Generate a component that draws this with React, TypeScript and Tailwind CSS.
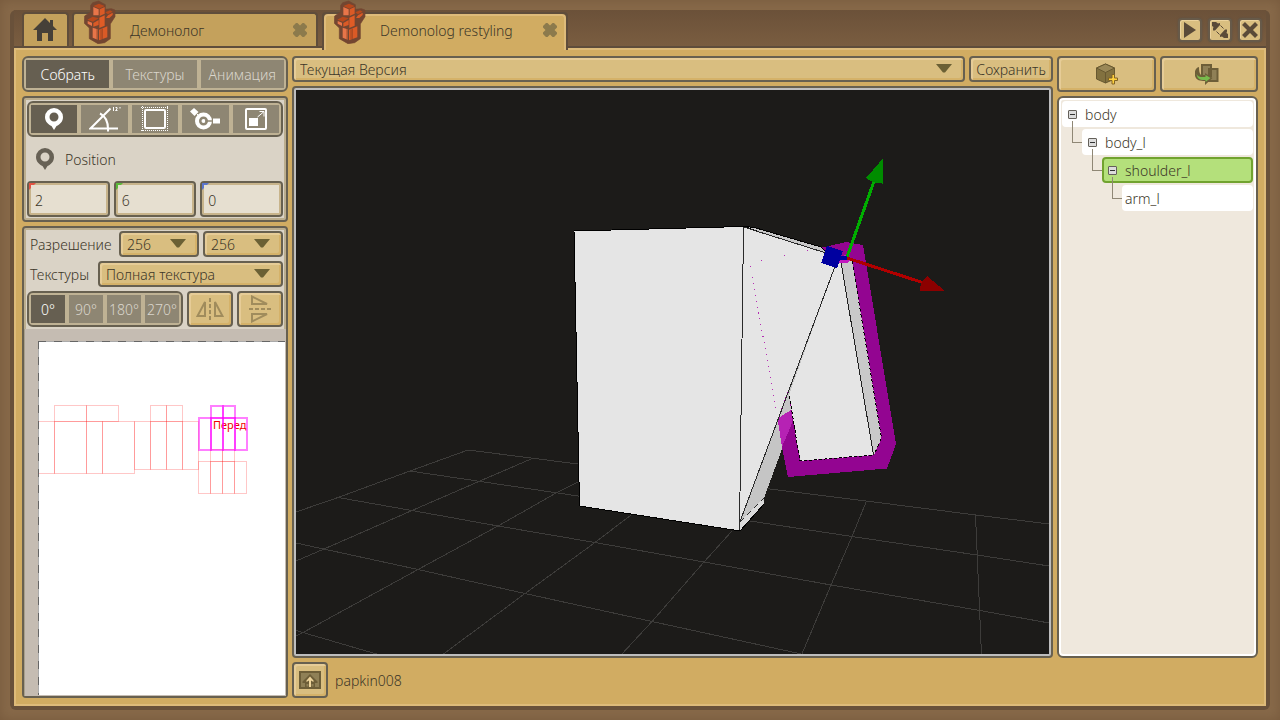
import { useState, type ReactNode } from "react";

const bevel =
  "rounded border-2 border-[#676050] bg-[#d9be80] text-[#3c3628] shadow-[inset_2px_2px_0_#e6cc97,inset_-2px_-2px_0_#d5b269]";

function Mascot() {
  return (
    <svg viewBox="44 0 96 132" className="absolute top-[-14px] left-[10px] h-11 w-8" aria-hidden="true">
      <path
        d="M88 3 70 8 64 16V36L46 48 45 70 60 84V116L86 131 106 128 123 116V72L137 50V30L126 26 108 28V14Z"
        fill="#734631"
        stroke="#734631"
        strokeWidth="2"
        strokeLinejoin="round"
      />
      <path d="M72 18 89 11 106 18 90 26Z" fill="#b8481c" />
      <path d="M72 21 88 28V46H72Z" fill="#e87549" />
      <path d="M91 28 106 21V41L91 48Z" fill="#da5a26" />
      <path d="M108 37 122 31 130 35 116 43Z" fill="#b8481c" />
      <path d="M116 46 130 38V45L120 54H110Z" fill="#da5a26" />
      <path d="M90 53 106 46V77L90 84Z" fill="#e05c26" />
      <path d="M54 59 70 50 88 55 71 65Z" fill="#b8481c" />
      <path d="M55 63 68 68V78L55 71Z" fill="#e87549" />
      <path d="M72 69 88 60V75L72 80Z" fill="#da5a26" />
      <path d="M70 83 85 88V119L70 113Z" fill="#e87549" />
      <path d="M89 89 114 79V112L89 121Z" fill="#da5a26" />
      <path d="M95 88V118M99 86V117M83 84V119" stroke="#8c3f20" strokeWidth="2" />
    </svg>
  );
}

function TabClose({ label }: { label: string }) {
  return (
    <button aria-label={label} className="ml-auto text-[#8c7a4c]">
      <svg viewBox="0 0 14 14" className="size-[14px]" fill="currentColor">
        <path d="M3 0h1.500L7 2.500 9.500 0H11l3 3v1.500L11.500 7 14 9.500V11l-3 3H9.500L7 11.500 4.500 14H3l-3-3V9.500L2.500 7 0 4.500V3z" />
      </svg>
    </button>
  );
}

function Caret() {
  return (
    <svg viewBox="0 0 16 9" className="pointer-events-none absolute top-2 right-[13px] h-[9px] w-4" aria-hidden="true">
      <path d="M0 0h16L9 8.500H7z" fill="#6b6034" />
    </svg>
  );
}

function Drop({ label, value, options, className }: { label: string; value: string; options: string[]; className: string }) {
  return (
    <div className={`relative ${className}`}>
      <select
        aria-label={label}
        defaultValue={value}
        className={`h-[26px] w-full appearance-none pt-0.5 pr-8 pl-[6px] leading-5 outline-none ${bevel}`}
      >
        {options.map((o) => (
          <option key={o}>{o}</option>
        ))}
      </select>
      <Caret />
    </div>
  );
}

function Segments({ items, active, onPick, className }: {
  items: { id: string; label: string; body: ReactNode }[];
  active: string;
  onPick: (id: string) => void;
  className: string;
}) {
  return (
    <div className={`flex h-9 gap-1 rounded-md border-2 border-[#676050] bg-[#bfb294] p-0.5 ${className}`}>
      {items.map((it) => (
        <button
          key={it.id}
          aria-label={it.label}
          aria-pressed={it.id === active}
          onClick={() => onPick(it.id)}
          className={`flex min-w-0 flex-1 items-center justify-center whitespace-nowrap ${
            it.id === active ? "bg-[#665f51] text-white" : "bg-[#8e8673] text-[#dbd6cd]"
          }`}
        >
          {it.body}
        </button>
      ))}
    </div>
  );
}

function Pin({ className }: { className: string }) {
  return (
    <svg viewBox="0 0 18 22" className={className} aria-hidden="true">
      <path
        fillRule="evenodd"
        fill="currentColor"
        d="M9 0a9 9 0 0 1 9 9c0 5-3.500 7.500-6.500 9L9 22l-2.500-4C3.500 16.500 0 14 0 9a9 9 0 0 1 9-9zm0 4.500a4.500 4.500 0 1 0 0 9 4.500 4.500 0 0 0 0-9z"
      />
    </svg>
  );
}

const tools = [
  { id: "position", label: "Position", body: <Pin className="h-[22px] w-[18px] text-white" /> },
  {
    id: "rotation",
    label: "Rotation",
    body: (
      <svg viewBox="0 0 32 26" className="h-[26px] w-8" fill="none" stroke="#fff" strokeWidth="2">
        <path d="M29 22.500H1.500L21.500 2.500M11 7.500c6 3 8.500 9 8 18" />
        <path d="M24.500 1v4M26.500 1.500h1.500v1.500l-1.500 1.500h2M31 1v1.500" strokeWidth="1" />
      </svg>
    ),
  },
  {
    id: "size",
    label: "Size",
    body: (
      <svg viewBox="0 0 28 26" className="h-[26px] w-7" fill="none" stroke="#fff">
        <rect x="4" y="4" width="20" height="18" rx="1" strokeWidth="2" />
        <path d="M0 1.500h28M0 24.500h28M1.500 0v26M26.500 0v26" strokeDasharray="1 1" />
      </svg>
    ),
  },
  {
    id: "pivot",
    label: "Pivot",
    body: (
      <svg viewBox="0 0 30 24" className="h-6 w-[30px]">
        <circle cx="13.500" cy="14" r="6.500" fill="none" stroke="#fff" strokeWidth="4" />
        <circle cx="13.500" cy="14" r="2" fill="#fff" />
        <path d="M4 1l4.500 4-4 4L0 4.500z" fill="#fff" />
        <path d="M7 7l2 2" stroke="#fff" />
        <path d="M15 14h9" stroke="#8e8673" strokeWidth="1.500" />
        <path d="M23 11.500h7v5h-7z" fill="#fff" />
      </svg>
    ),
  },
  {
    id: "scale",
    label: "Scale",
    body: (
      <svg viewBox="0 0 22 22" className="size-[22px]" fill="none" stroke="#fff">
        <rect x="1" y="1" width="20" height="20" rx="1" strokeWidth="2" />
        <path d="M4 10h9v8H4z" fill="#fff" stroke="none" />
        <path d="M12.500 9l6-5M14.500 3.500h4.500v5" />
      </svg>
    ),
  },
];

const textItem = (t: string) => ({ id: t, label: t, body: <span className="pt-0.5">{t}</span> });
const modes = ["Собрать", "Текстуры", "Анимация"].map(textItem);
const angles = ["0°", "90°", "180°", "270°"].map(textItem);

function Axis({ name, value, color }: { name: string; value: string; color: string }) {
  return (
    <label className="relative flex h-9 min-w-0 flex-1 rounded border-2 border-[#676050] bg-[#e6dfd0] shadow-[inset_0_0_0_2px_#c8b48b]">
      <svg viewBox="0 0 7 7" className="absolute top-0 left-0 size-[7px]" aria-hidden="true">
        <path d="M0 0h7L5 2H2v3L0 7z" fill={color} />
      </svg>
      <input aria-label={name} defaultValue={value} className="w-full min-w-0 bg-transparent pt-1 pl-[6px] text-[#3c3628] outline-none" />
    </label>
  );
}

const uvRects: [number, number, number, number][] = [
  [54, 405, 32, 16], [86, 405, 32, 16],
  [38, 421, 16, 52], [54, 421, 32, 52], [86, 421, 16, 52], [102, 421, 32, 52],
  [150, 405, 16, 16], [166, 405, 16, 16],
  [134, 421, 16, 48], [150, 421, 16, 48], [166, 421, 16, 48], [182, 421, 16, 48],
  [210, 449, 12, 12], [222, 449, 12, 12],
  [198, 461, 12, 32], [210, 461, 12, 32], [222, 461, 12, 32], [234, 461, 12, 32],
];
const uvActive: [number, number, number, number][] = [
  [211, 406, 12, 12], [223, 406, 12, 12],
  [199, 418, 12, 32], [211, 418, 12, 32], [223, 418, 12, 32], [235, 418, 12, 32],
];

function UvMap() {
  return (
    <svg viewBox="38 341 247 354" preserveAspectRatio="xMinYMin slice" className="h-0 min-h-0 w-full flex-1 bg-white">
      <g fill="none" stroke="#f00" strokeOpacity=".22" shapeRendering="crispEdges">
        {uvRects.map(([x, y, w, h]) => (
          <rect key={`${x}-${y}`} x={x + 0.5} y={y + 0.5} width={w} height={h} />
        ))}
      </g>
      <text x="213" y="429" fill="#f00000" fontSize="11" fontWeight="400">Перед</text>
      <g fill="none" stroke="#f0f" strokeOpacity=".5" strokeWidth="2" shapeRendering="crispEdges">
        {uvActive.map(([x, y, w, h]) => (
          <rect key={`${x}-${y}`} x={x} y={y} width={w} height={h} />
        ))}
      </g>
      <path d="M38 341.500h248M38.500 341v355" stroke="#aaa" shapeRendering="crispEdges" />
      <path d="M38 341.500h248M38.500 341v355" stroke="#666" strokeDasharray="8 8" shapeRendering="crispEdges" />
    </svg>
  );
}

function Scene() {
  return (
    <svg
      viewBox="296 90 753 564"
      preserveAspectRatio="xMidYMid slice"
      shapeRendering="crispEdges"
      className="h-0 min-h-0 w-full flex-1"
      role="img"
      aria-label="3D"
    >
      <g fill="none" stroke="#3d3c3a">
        <path d="M296 512 338 497.500 410 471 468 450 578 464 770 489 866 501 976 515 1049 524" />
        <path d="M410 471 578 496 750 521 852 536.500 977 555 1049 566" />
        <path d="M338 497.500 412 510.500 498 526 595 542.500 704 562 831 585 980 610.500 1049 623" />
        <path d="M296 543 418 569.500 525 593.500 652 621.500 806 655M296 630.500 380 655" />
        <path d="M531 459 480 481 412 510.500 324 549 296 561M578 482 557 492.500 498 526 418 569.500 304 632 296 636" />
        <path d="M631 515 595 542.500 525 593.500 442 655M732 531 704 562 652 621.500 621 655" />
        <path d="M866.500 501 852 536.500 831 585 801.500 655M975.500 515 981.500 655" />
      </g>
      <path d="M816 249 846 242 863 245 896 444 887 468.500 788 477 777 418Z" fill="#930591" />
      <path d="M743 226 756 228 821 247 828 254 822 255Z" fill="#c8c8c8" stroke="#000" strokeWidth="1" />
      <path d="M841 261 852 261 881.500 438 874 455Z" fill="#c9c9c9" />
      <path d="M832 263 841 262 874 455 800 461 789 395 787 380Z" fill="#e5e5e5" />
      <path d="M852 261 881.500 438 874 455" stroke="#000" strokeDasharray="3 3" fill="none" />
      <path d="M836 264 789 395 790 410 782 449 764 498 764 504 740 531V520Z" fill="#c5c5c5" />
      <path d="M836 264 789 395 791 403 800 461 874 455 841 262Z" fill="#e5e5e5" />
      <path d="M841 262 873.500 455" stroke="#222" strokeWidth="1" />
      <path d="M789 395 791 410 792.500 422 782 449 777 418Z" fill="#c5c5c5" />
      <path d="M777.500 418.500 791 410 792.500 422 782 447Z" fill="#b622b4" />
      <path d="M792.500 422 782 447 788 477 800 461Z" fill="#930591" />
      <path d="M574 231 743 226.500 740 531 579.500 506Z" fill="#e5e5e5" />
      <path d="M743 226.500 826 252.500 835 262 740 522Z" fill="#e5e5e5" />
      <path d="M740 531 764 504 763 498 740 522Z" fill="#dadada" />
      <path d="M743.500 227 826 253M835.500 265 739.500 523M743.500 227 742 340 739.500 531" fill="none" stroke="#2a2a2a" strokeWidth="1" />
      <path d="M740 522 764 498" fill="none" stroke="#2a2a2a" strokeWidth="1" strokeDasharray="6 4" />
      <path d="M574 231 743 226.500M574 231 579.500 506 740 531 764 504" fill="none" stroke="#000" strokeWidth="1" />
      <path d="M789 396 791 406 800 461 874 455" fill="none" stroke="#000" strokeWidth="1" strokeDasharray="3 2" />
      <path d="M807 250.500h1M784 255.500h1M761 260.500h1M750 266.500h1" stroke="#b52db3" />
      <path d="M752.500 277 776 410" stroke="#b52db3" strokeDasharray="1 5" />
      <path d="M839 260h7v3h-7z" fill="#c219bf" />
      <circle cx="846" cy="259" r="4" fill="#c219bf" />
      <path d="M847 257 874.500 180" stroke="#00ae00" strokeWidth="3" />
      <path d="M882.500 159 866 178Q874 184 883.500 183.500Z" fill="#008c00" />
      <path d="M847 258 924 283" stroke="#b00000" strokeWidth="3" />
      <path d="M945 291 927 276Q920 282 920 290.500Z" fill="#8c0000" />
      <path d="M840 257.500h7" stroke="#0000a0" strokeWidth="4" />
      <path d="M827 246 843 251 837 268 821 263Z" fill="#0000a0" />
    </svg>
  );
}

type TreeNode = { name: string; selected?: boolean; children?: TreeNode[] };
const tree: TreeNode = {
  name: "body",
  children: [{ name: "body_l", children: [{ name: "shoulder_l", selected: true, children: [{ name: "arm_l" }] }] }],
};

function Branch({ node, root = false }: { node: TreeNode; root?: boolean }) {
  return (
    <li className="relative">
      {!root && <span className="absolute top-[-8px] left-[-10px] h-[22px] w-[10px] border-b border-l border-[#8f8775]" />}
      <div
        className={`flex h-[26px] items-center rounded-sm border-2 ${
          node.selected ? "border-[#71a32f] bg-[#b4e07b]" : "border-white bg-white"
        } ${node.children ? "gap-2 pl-1" : "pl-px"}`}
      >
        {node.children && (
          <button aria-label="Свернуть" className="flex size-[9px] items-center justify-center rounded-[1px] border border-[#64605a] bg-[#dcdcdc]">
            <span className="h-px w-[5px] bg-[#333]" />
          </button>
        )}
        <span className="pt-0.5">{node.name}</span>
      </div>
      {node.children && (
        <ul className="mt-0.5 ml-5">
          {node.children.map((c) => (
            <Branch key={c.name} node={c} />
          ))}
        </ul>
      )}
    </li>
  );
}

const panel = "rounded border-2 border-[#676050] bg-[#dad3c6] shadow-[inset_0_0_0_2px_#bcae8e]";
const winButton =
  "flex size-6 items-center justify-center rounded-sm border-2 border-[#675a49] bg-[#d9be80] text-[#5a4a38] shadow-[inset_1px_1px_0_#ebd29c,0_0_2px_#59524a]";

export default function App() {
  const [mode, setMode] = useState("Собрать");
  const [tool, setTool] = useState("position");
  const [angle, setAngle] = useState("0°");

  return (
    <div className="flex min-h-screen flex-col bg-[#876949] p-[10px] font-['Noto_Sans',sans-serif] text-sm leading-5 font-light text-[#3c3628] shadow-[inset_0_0_12px_#775a3d]">
      <div className="flex flex-1 flex-col rounded-md bg-[#69513a] px-1 pb-1">
        <header className="flex h-[38px] items-end border-b-2 border-[#5f4d3b] bg-linear-to-b from-[#6b5139] to-[#7a5d40] pr-1 pl-2">
          <button aria-label="Домой" className="flex h-[34px] w-[47px] items-center justify-center rounded-t-sm border-x-2 border-t-2 border-[#5f4d3b] bg-[#c4a15c] pr-0.5 pb-0.5">
            <svg viewBox="0 0 24 23" className="h-[23px] w-6" fill="#464038">
              <path d="M12 0l5 5V2h3v6l4 4h-4v11h-5v-8H9v8H4V12H0z" />
            </svg>
          </button>
          <div className="relative ml-[3px] flex h-[34px] w-[246px] items-center rounded-t-sm border-x-2 border-t-2 border-[#5f4d3b] bg-[#c4a15c] pr-[9px] pl-14">
            <Mascot />
            <a href="#demonolog" className="pt-0.5">Демонолог</a>
            <TabClose label="Закрыть Демонолог" />
          </div>
          <div className="relative z-10 ml-1 mb-[-4px] flex h-[38px] w-[246px] rounded-t border-x-2 border-t-2 border-[#5f4d3b]">
            <div className="flex w-full items-center rounded-t-sm border-x-2 border-t-2 border-[#debb7a] bg-[#d1ac62] pr-[7px] pb-[6px] pl-[54px]">
              <Mascot />
              <a href="#restyling" className="pt-0.5">Demonolog restyling</a>
              <TabClose label="Закрыть Demonolog restyling" />
            </div>
          </div>
          <div className="mb-1 ml-auto flex gap-[6px]">
            <button aria-label="Запуск" className={winButton}>
              <svg viewBox="0 0 12 16" className="h-4 w-3" fill="currentColor"><path d="M0 0l12 8-12 8z" /></svg>
            </button>
            <button aria-label="Развернуть" className={winButton}>
              <svg viewBox="0 0 16 16" className="size-4 shrink-0" fill="currentColor">
                <path d="M0 0h4l2 1.500L8 1v2L3 8.500H1V6.500L1.500 5 0 4zM16 16h-4l-2-1.500L8 15v-2l5-5.500h2V9.500L14.500 11l1.500 1z" />
                <path d="M8.500 3.500l3 3M4.500 9.500l3 3" stroke="currentColor" />
              </svg>
            </button>
            <button aria-label="Закрыть" className={winButton}>
              <svg viewBox="0 0 16 16" className="size-4 shrink-0" stroke="currentColor" strokeWidth="4.200"><path d="M1.500 1.500l13 13M14.500 1.500l-13 13" /></svg>
            </button>
          </div>
        </header>

        <main className="flex flex-1 gap-1 border-2 border-[#debb7a] bg-[#d1ac62] p-[6px]">
          <aside className="flex w-[266px] shrink-0 flex-col gap-1">
            <Segments items={modes} active={mode} onPick={setMode} className="" />

            <section className={`flex flex-col p-[3px] ${panel}`}>
              <Segments items={tools} active={tool} onPick={setTool} className="" />
              <div className="flex h-11 items-center gap-[11px] pl-[9px]">
                <Pin className="h-[22px] w-[18px] text-[#676155]" />
                <span className="pt-0.5">Position</span>
              </div>
              <div className="flex gap-1">
                <Axis name="X" value="2" color="#e25444" />
                <Axis name="Y" value="6" color="#5bb83a" />
                <Axis name="Z" value="0" color="#5b75cc" />
              </div>
            </section>

            <section className={`flex flex-1 flex-col ${panel}`}>
              <div className="flex flex-col gap-1 p-[3px] pb-0.5">
                <div className="flex items-center gap-1">
                  <span className="w-[88px] pt-0.5 pl-[3px]">Разрешение</span>
                  <Drop label="Ширина" value="256" options={["64", "128", "256", "512"]} className="min-w-0 flex-1" />
                  <Drop label="Высота" value="256" options={["64", "128", "256", "512"]} className="min-w-0 flex-1" />
                </div>
                <div className="flex items-center gap-1">
                  <span className="w-[67px] pt-0.5 pl-[3px]">Текстуры</span>
                  <Drop label="Текстуры" value="Полная текстура" options={["Полная текстура"]} className="min-w-0 flex-1" />
                </div>
                <div className="flex gap-1">
                  <Segments items={angles} active={angle} onPick={setAngle} className="w-[156px]" />
                  <button aria-label="Отразить по горизонтали" className={`flex h-9 flex-1 items-center justify-center ${bevel}`}>
                    <svg viewBox="0 0 28 24" className="h-6 w-7" fill="none" stroke="#a08c5c" strokeWidth="2">
                      <path d="M9 5v14H1.500zM19 5v14h7.500z" />
                      <path d="M14 1v22" strokeDasharray="4 2" />
                    </svg>
                  </button>
                  <button aria-label="Отразить по вертикали" className={`flex h-9 flex-1 items-center justify-center ${bevel}`}>
                    <svg viewBox="0 0 24 28" className="h-7 w-6" fill="none" stroke="#a08c5c" strokeWidth="2">
                      <path d="M4 9V1.500l15 7.500zM4 19v7.500l15-7.500z" />
                      <path d="M1 14h22" strokeDasharray="4 2" />
                    </svg>
                  </button>
                </div>
              </div>
              <div className="flex flex-1 flex-col bg-[#c5bcb2] pt-3 pr-px pb-px pl-[14px] shadow-[inset_1px_0_0_#a89f8c]">
                <UvMap />
              </div>
            </section>
          </aside>

          <section className="flex min-w-0 flex-1 flex-col gap-1">
            <div className="flex gap-1">
              <Drop label="Версия" value="Текущая Версия" options={["Текущая Версия"]} className="min-w-0 flex-1" />
              <button className={`h-[26px] w-[84px] pt-0.5 ${bevel}`}>Сохранить</button>
            </div>
            <div className="flex flex-1 flex-col rounded border-2 border-[#676050] bg-[#bebebe] p-0.5">
              <div className="flex flex-1 flex-col bg-[#1c1b19]">
                <Scene />
              </div>
            </div>
            <div className="flex items-center gap-[7px]">
              <button aria-label="Загрузить" className={`flex size-9 items-center justify-center ${bevel}`}>
                <svg viewBox="0 0 22 18" className="h-[18px] w-[22px]">
                  <path d="M1 1h20v16H1z" fill="#8f8056" stroke="#6d5e38" strokeWidth="2" />
                  <path d="M11 3l7.500 7.500V12H16v5H6v-5H3.500v-1.500z" fill="#6d5e38" />
                  <path d="M7.500 13v2.500h2V13zM12.500 13v2.500h2V13z" fill="#8f8056" />
                  <path d="M11 5.500l3.500 4v1.500L12 9.500V16h-2V9.500l-2.500 1.500V9.500z" fill="#ecd39b" />
                </svg>
              </button>
              <span className="pt-0.5">papkin008</span>
            </div>
          </section>

          <aside className="flex w-[201px] shrink-0 flex-col gap-1 pb-10">
            <div className="flex gap-1">
              <button aria-label="Добавить блок" className={`flex h-9 flex-1 items-center justify-center ${bevel}`}>
                <svg viewBox="0 0 22 22" className="ml-0.5 size-[22px]" strokeLinejoin="round">
                  <path d="M9.500 1l9 4v11l-9 4-9-4V5z" fill="#82713f" stroke="#685931" />
                  <path d="M9.500 1l9 4-9 4.500-9-4.500z" fill="#9a8857" stroke="#685931" />
                  <path d="M9.500 9.500V20" stroke="#685931" />
                  <path d="M16 11.500h2.500v3.500h3v2.500h-3V21H16v-3.500h-3.500V15H16z" fill="#ffd23d" stroke="#816325" />
                </svg>
              </button>
              <button aria-label="Переместить" className={`flex h-9 flex-1 items-center justify-center ${bevel}`}>
                <svg viewBox="0 0 24 22" className="mr-1 h-[22px] w-6">
                  <path d="M7 2h9v11H7zM14 6h8.500v12H14z" fill="#8f8056" stroke="#6d5e38" strokeWidth="2" />
                  <path d="M4 4C0 5-1 10 0 13c1.500 4.500 5 5 10 5v4l7.500-7-7.500-5v3C6 13 4 12 4 4z" fill="#6d5e38" />
                  <path d="M1.500 11C3 14.500 6 14 10.500 14V12l5 3-5 4v-2C6 17 2.500 17 1.500 11z" fill="#78ba4c" />
                </svg>
              </button>
            </div>
            <div className="flex-1 rounded-md border-2 border-[#676050] bg-[#efe8dd] px-[3px] py-[3px] shadow-[inset_0_0_0_2px_#fff]">
              <ul>
                <Branch node={tree} root />
              </ul>
            </div>
          </aside>
        </main>
      </div>
    </div>
  );
}
